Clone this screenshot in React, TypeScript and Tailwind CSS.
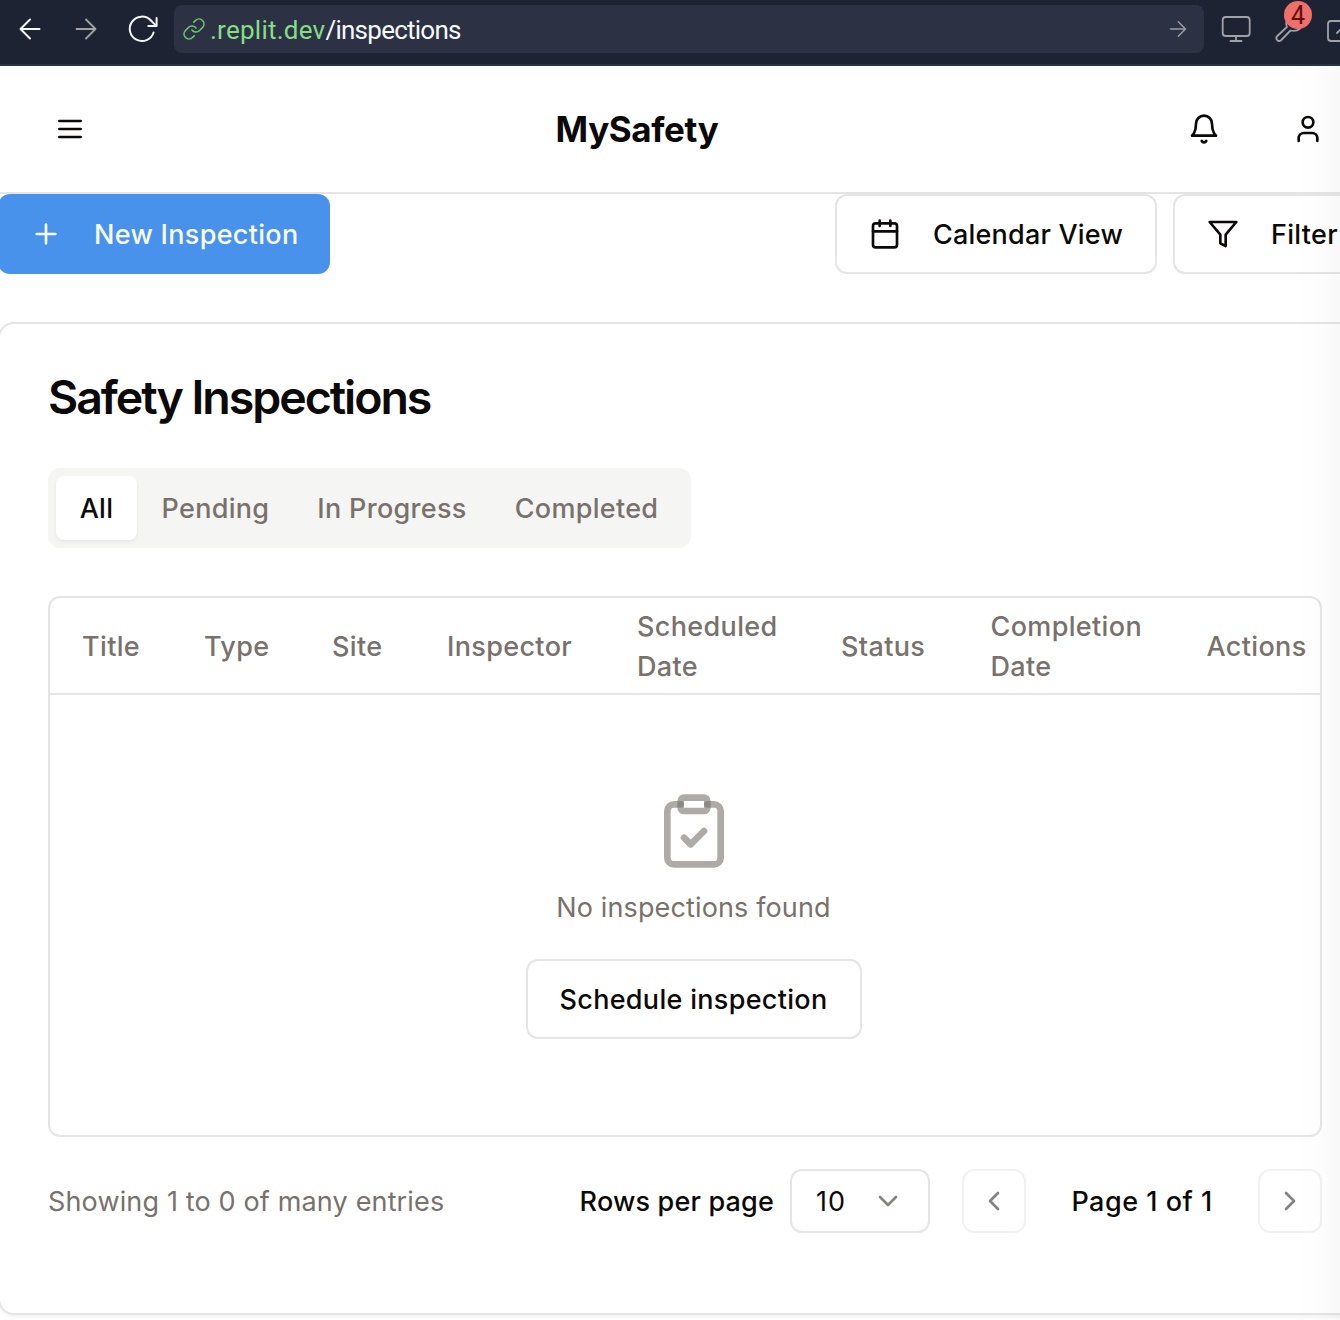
import React from 'react';

type IconProps = { className?: string; size?: number; strokeWidth?: number; children: React.ReactNode };

function Icon({ className = '', size = 32, strokeWidth = 2, children }: IconProps) {
  return (
    <svg
      className={`shrink-0 ${className}`}
      width={size}
      height={size}
      viewBox="0 0 24 24"
      fill="none"
      stroke="currentColor"
      strokeWidth={strokeWidth}
      strokeLinecap="round"
      strokeLinejoin="round"
    >
      {children}
    </svg>
  );
}

function BrowserBar() {
  return (
    <div className="flex h-[66px] shrink-0 border-b-2 border-[#2b3245] bg-[#1e2333] font-['Roboto',sans-serif]">
      <div className="flex w-[174px] shrink-0 items-center pb-[6px] pl-[18px]">
        <svg width="24" height="24" viewBox="0 0 24 24" fill="none" stroke="#f5f9fc" strokeWidth="2" strokeLinecap="round" strokeLinejoin="round">
          <path d="M21.5 12H2.5M12 2.5 2.5 12l9.5 9.5" />
        </svg>
        <svg className="ml-[32px]" width="24" height="24" viewBox="0 0 24 24" fill="none" stroke="#a3a3a6" strokeWidth="1.8" strokeLinecap="round" strokeLinejoin="round">
          <path d="M2.5 12h19M12 2.5l9.5 9.5-9.5 9.5" />
        </svg>
        <svg className="ml-[29px]" width="32" height="32" viewBox="0 0 32 32" fill="none" stroke="#f5f9fc" strokeWidth="2" strokeLinecap="round" strokeLinejoin="round">
          <path d="M26.600 19.500A12.200 12.200 0 1 1 23.700 7.300L29 12.600" />
          <path d="M29.600 5v8.100h-8.300" />
        </svg>
      </div>
      <div className="mt-[5px] flex h-12 w-[1030px] shrink-0 items-center rounded-lg bg-[#2c3144] pl-2 pr-[16px]">
        <svg width="24" height="24" viewBox="0 0 24 24" fill="none" stroke="#6cc970" strokeWidth="1.6" strokeLinecap="round" strokeLinejoin="round">
          <path d="M10 13a5 5 0 0 0 7.54.54l3-3a5 5 0 0 0-7.07-7.07l-1.72 1.71" />
          <path d="M14 11a5 5 0 0 0-7.54-.54l-3 3a5 5 0 0 0 7.07 7.07l1.71-1.71" />
        </svg>
        <span className="ml-[4px] flex-1 whitespace-nowrap pt-px text-[26px] leading-8 tracking-[-0.75px] text-[#f5f9fc]">
          <span className="tracking-[0.25px] text-[#86dd86]">.replit.dev</span>/inspections
        </span>
        <svg width="20" height="20" viewBox="0 0 20 20" fill="none" stroke="#9a9ca3" strokeWidth="1.5" strokeLinecap="round" strokeLinejoin="round">
          <path d="M2.5 10h15M10.3 2.8l7.2 7.2-7.2 7.2" />
        </svg>
      </div>
      <div className="relative flex min-w-0 flex-1 overflow-hidden">
        <svg className="shrink-0" width="136" height="62" viewBox="0 0 136 62" fill="none" stroke="#a0a2a8" strokeWidth="1.8" strokeLinecap="round" strokeLinejoin="round">
          <rect x="18.7" y="17" width="27" height="19" rx="3" />
          <path d="M32 36v5M26.5 41h11" />
          <path d="M82.500 21c-.6 2.700-.2 4.500.4 6L72.800 36.500a2.900 2.900 0 0 0 4 4L86.500 30.500c3.500.9 7 .4 9.500-1.700" />
          <path d="M140 21h-13a3 3 0 0 0-3 3v14a3 3 0 0 0 3 3h13M133 33l7-7" />
        </svg>
        <div className="absolute left-[80px] top-px size-7 rounded-full bg-[#ef6f6a] text-center text-[25px] leading-[30px] text-[#5c1210]">4</div>
      </div>
    </div>
  );
}

function Header() {
  return (
    <header className="grid h-[128px] shrink-0 grid-cols-[1fr_auto_1fr] items-center border-b-2 border-[#e5e5e5]">
      <Icon className="ml-[54px]">
        <path d="M4 6h16M4 12h16M4 18h16" />
      </Icon>
      <h1 className="mr-[66px] pb-px text-[35px] font-bold leading-[56px] tracking-[-0.4px]">MySafety</h1>
      <div className="flex justify-end gap-[72px] pr-4">
        <Icon>
          <path d="M6 8a6 6 0 0 1 12 0c0 7 3 9 3 9H3s3-2 3-9" />
          <path d="M10.300 21a1.940 1.940 0 0 0 3.400 0" />
        </Icon>
        <Icon>
          <path d="M19 21v-2a4 4 0 0 0-4-4H9a4 4 0 0 0-4 4v2" />
          <circle cx="12" cy="7" r="4" />
        </Icon>
      </div>
    </header>
  );
}

const outline = 'rounded-xl border-2 border-[#e5e5e5] bg-white';

function Toolbar() {
  return (
    <div className="-ml-0.5 flex h-20 w-[1400px] shrink-0 font-medium">
      <button className="flex w-[332px] shrink-0 items-center gap-8 rounded-xl bg-[#4892eb] pl-8 tracking-[0.3px] text-[#f8fbff]">
        <Icon>
          <path d="M5 12h14M12 5v14" />
        </Icon>
        <span className="whitespace-nowrap pt-0.5">New Inspection</span>
      </button>
      <button className={`ml-[505px] flex w-[322px] shrink-0 items-center gap-8 pl-8 tracking-[0.2px] ${outline}`}>
        <Icon>
          <path d="M8 2v4M16 2v4M3 10h18" />
          <rect width="18" height="18" x="3" y="4" rx="2" />
        </Icon>
        <span className="whitespace-nowrap pt-0.5">Calendar View</span>
      </button>
      <button className={`ml-4 flex w-[200px] shrink-0 items-center gap-8 pl-8 tracking-[0.3px] ${outline}`}>
        <Icon>
          <polygon points="22 3 2 3 10 12.46 10 19 14 21 14 12.46 22 3" />
        </Icon>
        <span className="whitespace-nowrap pt-0.5">Filter</span>
      </button>
    </div>
  );
}

function Tabs() {
  return (
    <div className="mt-[45px] flex h-20 w-[643px] items-center rounded-xl bg-[#f5f5f4] p-2 font-medium tracking-[0.3px] text-[#78716c]">
      <div className="flex h-16 w-[81px] items-center justify-center rounded-lg bg-white pt-0.5 text-[#0c0a09] shadow-[0_2px_4px_rgba(0,0,0,0.06)]">All</div>
      <div className="w-[157px] pt-0.5 text-center">Pending</div>
      <div className="w-[196px] whitespace-nowrap pt-0.5 text-center">In Progress</div>
      <div className="w-[193px] pt-0.5 text-center">Completed</div>
    </div>
  );
}

const columns = ['Title', 'Type', 'Site', 'Inspector', 'Scheduled Date', 'Status', 'Completion Date', 'Actions'];

function InspectionTable() {
  return (
    <div className="mt-12 h-[541px] w-[1274px] overflow-hidden rounded-xl border-2 border-[#e5e5e5]">
      <div className="w-[1287px]">
        <div className="grid h-[97px] grid-cols-[122px_128px_115px_190px_204px_149.500px_216px_162px] items-center border-b-2 border-[#e5e5e5] font-medium tracking-[0.35px] text-[#78716c]">
          {columns.map((c) => (
            <div key={c} className="pl-8 pr-6 pt-0.5 leading-10">
              {c}
            </div>
          ))}
        </div>
        <div className="flex flex-col items-center pt-24">
          <Icon size={80} className="text-[#78716c]/60">
            <rect width="8" height="4" x="8" y="2" rx="1" ry="1" />
            <path d="M16 4h2a2 2 0 0 1 2 2v14a2 2 0 0 1-2 2H6a2 2 0 0 1-2-2V6a2 2 0 0 1 2-2h2" />
            <path d="m9 14 2 2 4-4" />
          </Icon>
          <p className="mt-[17px] leading-10 tracking-[0.13px] text-[#78716c]">No inspections found</p>
          <button className={`mt-[31px] h-20 w-[336px] pt-0.5 font-medium tracking-[0.3px] ${outline}`}>Schedule inspection</button>
        </div>
      </div>
    </div>
  );
}

function Pagination() {
  return (
    <div className="mt-8 flex h-16 w-[1274px] items-center whitespace-nowrap font-medium tracking-[0.17px]">
      <span className="flex-1 pt-0.5 font-normal tracking-[0.15px] text-[#78716c]">Showing 1 to 0 of many entries</span>
      <span className="pt-0.5">Rows per page</span>
      <div className={`ml-4 flex h-16 w-[140px] items-center justify-between pl-6 pr-6 font-normal tracking-[1px] ${outline}`}>
        <span className="pt-0.5">10</span>
        <Icon className="text-[#858483]">
          <path d="m6 9 6 6 6-6" />
        </Icon>
      </div>
      <button className={`ml-8 flex size-16 items-center justify-center opacity-50 ${outline}`}>
        <Icon>
          <path d="m15 18-6-6 6-6" />
        </Icon>
      </button>
      <span className="w-[232px] pt-0.5 text-center tracking-[0.5px]">Page 1 of 1</span>
      <button className={`flex size-16 items-center justify-center opacity-50 ${outline}`}>
        <Icon>
          <path d="m9 18 6-6-6-6" />
        </Icon>
      </button>
    </div>
  );
}

export default function App() {
  return (
    <div className="relative flex h-[1320px] w-[1340px] flex-col overflow-hidden bg-white font-['Inter',sans-serif] text-[27px] leading-10 text-[#0c0a09]">
      <BrowserBar />
      <Header />
      <Toolbar />
      <main className="-ml-0.5 mt-12 h-[993px] w-[1400px] shrink-0 rounded-2xl border-2 border-[#e5e5e5] pl-12 pt-[47px] shadow-[0_2px_4px_rgba(0,0,0,0.06)]">
        <h2 className="text-[46.5px] font-semibold leading-[52px] tracking-[-2.05px]">Safety Inspections</h2>
        <Tabs />
        <InspectionTable />
        <Pagination />
      </main>
      <div className="pointer-events-none absolute bottom-0 right-0 top-[66px] w-12 bg-linear-to-r from-transparent via-black/[0.006] to-black/[0.025]" />
    </div>
  );
}
